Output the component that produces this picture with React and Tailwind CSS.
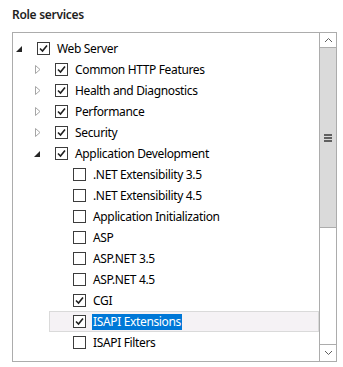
import React from "react";

const rows = [
  { label: "Web Server", level: 0, expander: "open", checked: true },
  { label: "Common HTTP Features", level: 1, expander: "closed", checked: true },
  { label: "Health and Diagnostics", level: 1, expander: "closed", checked: true },
  { label: "Performance", level: 1, expander: "closed", checked: true },
  { label: "Security", level: 1, expander: "closed", checked: true },
  { label: "Application Development", level: 1, expander: "open", checked: true },
  { label: ".NET Extensibility 3.5", level: 2 },
  { label: ".NET Extensibility 4.5", level: 2 },
  { label: "Application Initialization", level: 2 },
  { label: "ASP", level: 2 },
  { label: "ASP.NET 3.5", level: 2 },
  { label: "ASP.NET 4.5", level: 2 },
  { label: "CGI", level: 2, checked: true },
  { label: "ISAPI Extensions", level: 2, checked: true, selected: true },
  { label: "ISAPI Filters", level: 2 },
];

const indent = ["pl-0", "pl-[18px]", "pl-[36px]"];

function Expander({ kind }) {
  if (kind === "open") {
    return (
      <svg width="13" height="13" viewBox="0 0 13 13">
        <path d="M9 4 L9 10 L3 10 Z" fill="#262626" />
      </svg>
    );
  }
  if (kind === "closed") {
    return (
      <svg width="13" height="13" viewBox="0 0 13 13">
        <path d="M4.5 2.5 L9 6.5 L4.5 10.5 Z" fill="none" stroke="#a6a6a6" strokeWidth="1" />
      </svg>
    );
  }
  return <div className="w-[13px] h-[13px]" />;
}

function Checkbox({ checked }) {
  return (
    <div className="w-[13px] h-[13px] border border-[#3c3c3c] bg-white flex items-center justify-center">
      {checked && (
        <svg width="9" height="9" viewBox="0 0 9 9">
          <path d="M1 4.5 L3.5 7 L8 1.5" fill="none" stroke="#1e1e1e" strokeWidth="1.6" />
        </svg>
      )}
    </div>
  );
}

function Row({ row }) {
  return (
    <div className={"h-[21px] flex items-center " + indent[row.level]}>
      <div
        className={
          "flex-1 h-[21px] flex items-center " +
          (row.selected ? "bg-[#f5f2f5] border border-[#dadada]" : "border border-transparent")
        }
      >
        <div className="w-[13px] flex items-center justify-center -ml-px">
          <Expander kind={row.expander} />
        </div>
        <div className="ml-[11px]">
          <Checkbox checked={row.checked} />
        </div>
        <span
          className={
            "ml-[6px] text-[12px] leading-[16px] tracking-[-0.35px] px-px " +
            (row.selected ? "bg-[#0078d7] text-white" : "text-[#000000]")
          }
        >
          {row.label}
        </span>
      </div>
    </div>
  );
}

export default function App() {
  return (
    <div
      className="w-[343px] h-[367px] bg-white pt-[7px] pl-[12px] pr-[6px]"
      style={{ fontFamily: '"Noto Sans", "Segoe UI", sans-serif' }}
    >
      <div className="text-[12px] leading-[16px] font-semibold tracking-[-0.3px] text-[#1e1e1e]">Role services</div>

      <div className="mt-[9px] h-[330px] border border-[#acacac] flex">
        {/* Tree */}
        <div className="flex-1 overflow-hidden pt-[5px]">
          {rows.map((r) => (
            <Row key={r.label} row={r} />
          ))}
        </div>

        {/* Scrollbar */}
        <div className="w-[17px] border-l border-[#acacac] flex flex-col">
          <div className="h-[14px] bg-white flex items-center justify-center">
            <svg width="9" height="6" viewBox="0 0 9 6">
              <path d="M1 5 L4.5 1.5 L8 5" fill="none" stroke="#606060" strokeWidth="1" />
            </svg>
          </div>
          <div className="h-[181px] bg-[#dadada] border-y border-[#acacac] flex flex-col items-center justify-center gap-px">
            <div className="w-[8px] h-[2px] bg-[#606060]" />
            <div className="w-[8px] h-[2px] bg-[#606060]" />
            <div className="w-[8px] h-[2px] bg-[#606060]" />
          </div>
          <div className="flex-1 bg-white" />
          <div className="h-[17px] bg-white border-t border-[#acacac] flex items-center justify-center">
            <svg width="9" height="6" viewBox="0 0 9 6">
              <path d="M1 1 L4.5 4.5 L8 1" fill="none" stroke="#606060" strokeWidth="1" />
            </svg>
          </div>
        </div>
      </div>
    </div>
  );
}
